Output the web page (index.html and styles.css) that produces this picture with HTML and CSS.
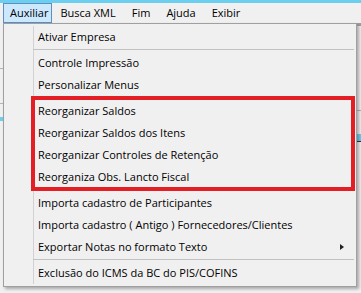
FILE: index.html
```html
<!DOCTYPE html>
<html lang="pt-BR">
<head>
    <meta charset="UTF-8">
    <meta name="viewport" content="width=device-width, initial-scale=1.0">
    <title>Auxiliar</title>
    <link rel="stylesheet" href="styles.css">
</head>
<body>
    <div class="title-strip"></div>
    <nav class="menubar">
        <span class="menubar-item active">Auxiliar</span>
        <span class="menubar-item">Busca XML</span>
        <span class="menubar-item">Fim</span>
        <span class="menubar-item">Ajuda</span>
        <span class="menubar-item">Exibir</span>
    </nav>
    <div class="workspace">
        <!-- bits of the window behind the open menu -->
        <div class="pane-left">
            <div class="line line-a"></div>
            <div class="line line-b"></div>
            <div class="bar bar-left"></div>
        </div>
        <div class="pane-right">
            <div class="frame-top"></div>
            <div class="line line-c"></div>
            <div class="bar bar-right"></div>
        </div>

        <div class="dropdown">
            <div class="menu-list">
                <div class="menu-item">Ativar Empresa</div>
                <div class="menu-sep"></div>
                <div class="menu-item">Controle Impressão</div>
                <div class="menu-item">Personalizar Menus</div>
                <div class="menu-sep"></div>
                <div class="menu-item">Reorganizar Saldos</div>
                <div class="menu-item">Reorganizar Saldos dos Itens</div>
                <div class="menu-item">Reorganizar Controles de Retenção</div>
                <div class="menu-item">Reorganiza Obs. Lancto Fiscal</div>
                <div class="menu-sep"></div>
                <div class="menu-item">Importa cadastro de Participantes</div>
                <div class="menu-item">Importa cadastro ( Antigo ) Fornecedores/Clientes</div>
                <div class="menu-item has-sub">Exportar Notas no formato Texto</div>
                <div class="menu-sep"></div>
                <div class="menu-item">Exclusão do ICMS da BC do PIS/COFINS</div>
            </div>
            <!-- highlight drawn over the reorganize group -->
            <div class="highlight-box"></div>
        </div>
    </div>
</body>
</html>
```

FILE: styles.css
```css
body {
    margin: 0;
    padding: 0;
    background-color: #f0f0f0;
    font-family: "Open Sans", "Noto Sans", sans-serif;
    font-size: 11px;
    color: #000;
    overflow: hidden;
}
.title-strip {
    height: 3px;
    background-color: #6ccff0;
}
.menubar {
    display: flex;
    height: 20px;
    padding-left: 3px;
}
.menubar-item {
    box-sizing: border-box;
    height: 20px;
    line-height: 18px;
    padding: 0 7px;
    border: 1px solid transparent;
}
.menubar-item.active {
    background-color: #cce8ff;
    border-color: #5f8fbf;
    padding: 0 3px 0 6px;
}
.workspace {
    position: relative;
    height: 270px;
    display: flex;
    justify-content: space-between;
}
.pane-left {
    width: 3px;
}
.pane-right {
    width: 4px;
}
.line {
    height: 1px;
    background-color: #b4b4b4;
}
.line-a {
    margin-top: 45px;
}
.line-b {
    margin-top: 34px;
}
.line-c {
    margin-top: 84px;
}
.frame-top {
    height: 3px;
    background-color: #a0a0a0;
}
.bar {
    background-color: #6ccff0;
}
.bar-left {
    margin-top: 13px;
    height: 4px;
}
.bar-right {
    margin-top: 23px;
    height: 7px;
    border-bottom: 1px solid #333;
}
.dropdown {
    position: absolute;
    left: 3px;
    top: 0;
    width: 354px;
    box-sizing: border-box;
    background-color: #f0f0f0;
    border: 1px solid #a0a0a0;
    padding: 2px 1px 2px 0;
    box-shadow: 2px 2px 3px rgba(0, 0, 0, 0.3);
}
.menu-list {
    background: linear-gradient(to right, transparent 29px, #d2d2d2 29px, #d2d2d2 30px, transparent 30px);
}
.menu-item {
    position: relative;
    height: 22px;
    line-height: 21px;
    padding-left: 34px;
    white-space: nowrap;
}
.menu-item.has-sub::after {
    content: "";
    position: absolute;
    right: 11px;
    top: 8px;
    border-left: 4px solid #222;
    border-top: 3.5px solid transparent;
    border-bottom: 3.5px solid transparent;
}
.menu-sep {
    height: 4px;
    box-sizing: border-box;
    margin: 0 1px 0 29px;
    border-top: 1px solid transparent;
    background: linear-gradient(#c2c2c2, #c2c2c2) no-repeat 0 0 / 100% 1px;
    background-origin: content-box;
}
.highlight-box {
    position: absolute;
    left: 27px;
    top: 72px;
    width: 324px;
    height: 95px;
    box-sizing: border-box;
    border: 4px solid #e31e24;
}
```
